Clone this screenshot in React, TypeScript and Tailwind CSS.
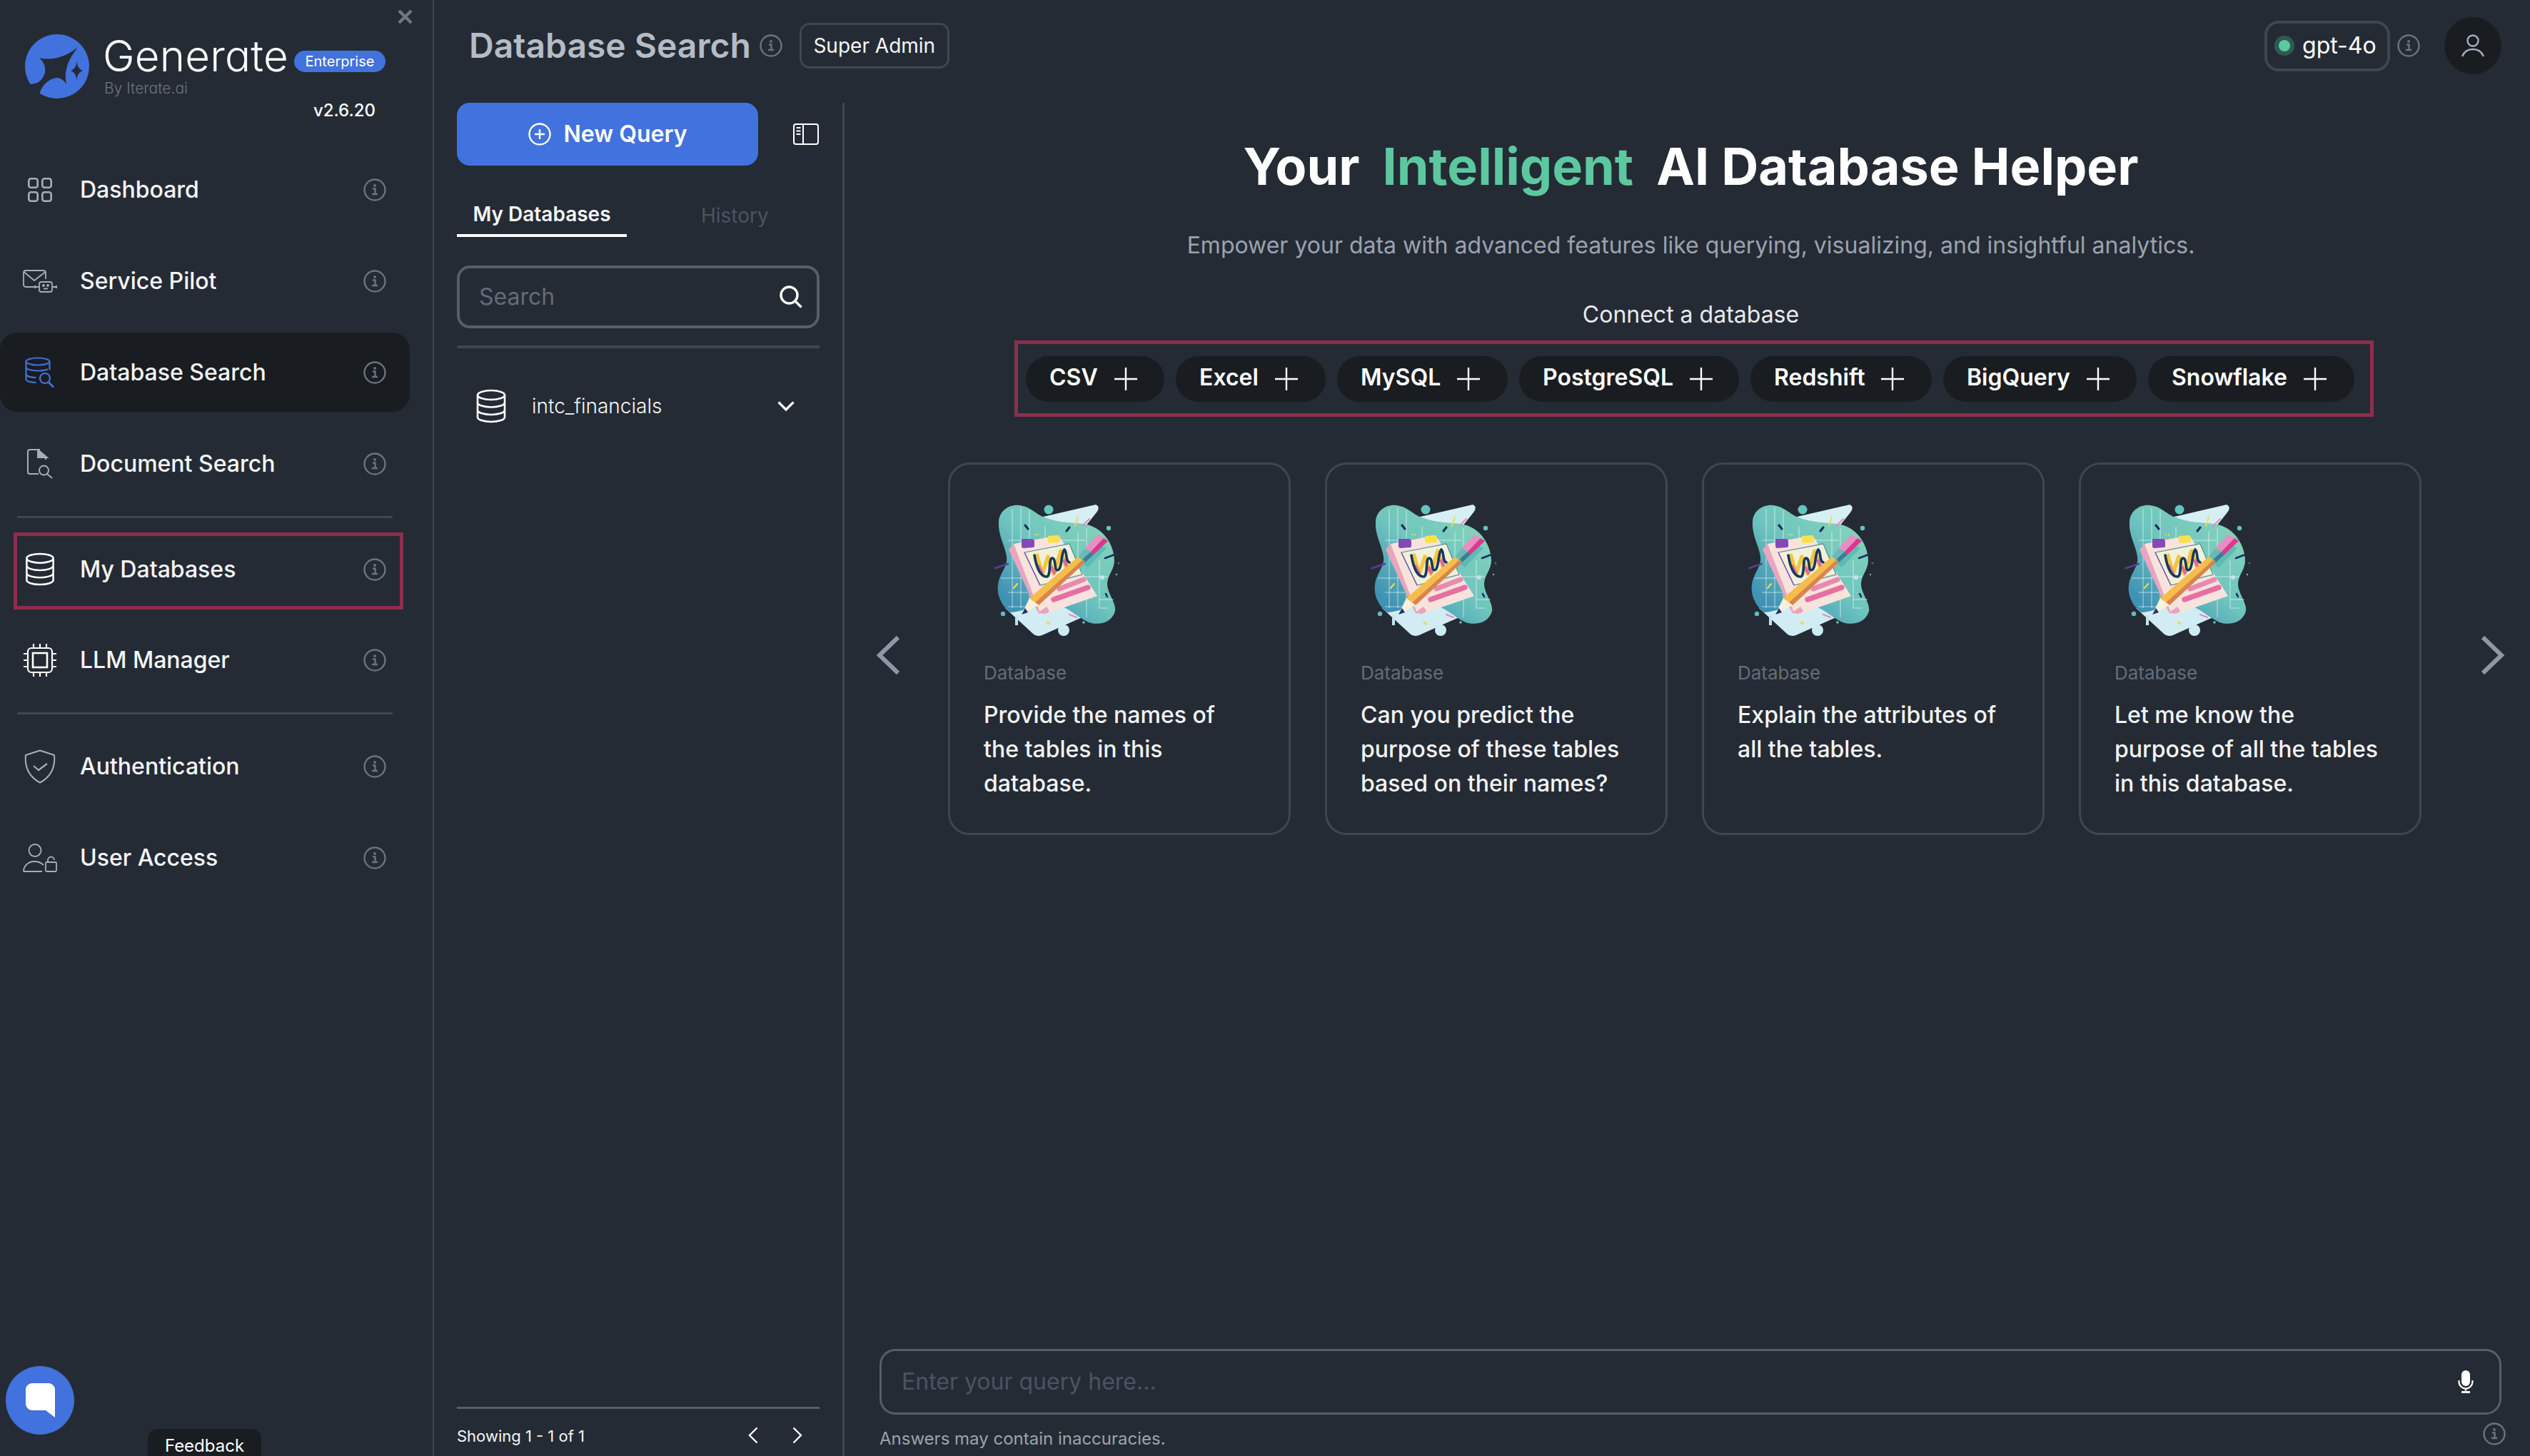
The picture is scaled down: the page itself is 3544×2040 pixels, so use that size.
import React from "react";

const Info = ({ className = "w-8 h-8" }: { className?: string }) => (
  <svg viewBox="0 0 32 32" className={className + " shrink-0"} fill="none">
    <circle cx="16" cy="16" r="14.5" stroke="#6b7381" strokeWidth="2.4" />
    <circle cx="16" cy="10" r="1.9" fill="#6b7381" />
    <path d="M13 14.5h3.5v7 M12 22h8" stroke="#6b7381" strokeWidth="2.4" />
  </svg>
);

const Db = ({ className = "", color = "#fff", sw = 3 }: { className?: string; color?: string; sw?: number }) => (
  <svg viewBox="0 0 42 48" className={className} fill="none" stroke={color} strokeWidth={sw}>
    <ellipse cx="21" cy="8.5" rx="19" ry="6.5" />
    <path d="M2 8.5v31c0 3.6 8.5 6.5 19 6.5s19-2.900 19-6.500v-31" />
    <path d="M2 19c0 3.600 8.500 6.500 19 6.500S40 22.600 40 19" />
    <path d="M2 29.500c0 3.600 8.500 6.500 19 6.500s19-2.900 19-6.500" />
  </svg>
);

const IconDashboard = () => (
  <svg viewBox="0 0 34 34" className="w-[34px] h-[34px]" fill="none" stroke="#a5aebb" strokeWidth="2.600">
    <rect x="1.300" y="1.300" width="12.400" height="12.400" rx="3" />
    <rect x="20.300" y="1.300" width="12.400" height="12.400" rx="3" />
    <rect x="1.300" y="20.300" width="12.400" height="12.400" rx="3" />
    <rect x="20.300" y="20.300" width="12.400" height="12.400" rx="3" />
  </svg>
);
const IconPilot = () => (
  <svg viewBox="0 0 48 32" className="w-12 h-8" fill="none" stroke="#a5aebb" strokeWidth="1.800">
    <path d="M15 24H4a3 3 0 0 1-3-3V4a3 3 0 0 1 3-3h25a3 3 0 0 1 3 3v9" />
    <path d="M1.500 3L16 15 31.500 3" />
    <rect x="23" y="17" width="18" height="14" rx="3" />
    <path d="M17 24h6M41 24h6" />
    <circle cx="17" cy="24" r="1" fill="#a5aebb" />
    <circle cx="47" cy="24" r="1" fill="#a5aebb" />
    <circle cx="29" cy="22" r="1" fill="#a5aebb" />
    <circle cx="35" cy="22" r="1" fill="#a5aebb" />
    <path d="M29 26.500h6" />
  </svg>
);
const IconDbSearch = () => (
  <svg viewBox="0 0 42 44" className="w-[42px] h-[44px]" fill="none" stroke="#4272dd" strokeWidth="2.200">
    <ellipse cx="18" cy="6.500" rx="16.500" ry="5" />
    <path d="M1.500 6.500v25c0 2.800 7 4.500 14 4.500M34.500 6.500v12" />
    <path d="M1.500 14.500c0 2.800 7.400 5 16.500 5 6 0 11-.8 14-2.200" />
    <path d="M1.500 24c0 2.800 6 4.800 14 5" />
    <circle cx="28" cy="30" r="7" />
    <path d="M33 35.500l7 7" strokeWidth="2.600" />
  </svg>
);
const IconDoc = () => (
  <svg viewBox="0 0 38 42" className="w-[38px] h-[42px]" fill="none" stroke="#a5aebb" strokeWidth="2">
    <path d="M19 1H5a3 3 0 0 0-3 3v28a3 3 0 0 0 3 3h12" />
    <path d="M16 1l13 11h-13z" fill="#a5aebb" />
    <path d="M27 11v4" />
    <circle cx="24.500" cy="30" r="6.500" />
    <path d="M29 35l7 6" />
  </svg>
);
const IconChip = () => (
  <svg viewBox="0 0 48 48" className="w-12 h-12" fill="none" stroke="#fff" strokeWidth="2.200">
    <rect x="7" y="7" width="34" height="34" rx="5" />
    <rect x="14" y="14" width="20" height="20" strokeWidth="2.600" />
    <path d="M15 1v6M24 1v6M33 1v6M15 41v6M24 41v6M33 41v6M1 15h6M1 24h6M1 33h6M41 15h6M41 24h6M41 33h6" />
  </svg>
);
const IconShield = () => (
  <svg viewBox="0 0 44 48" className="w-[44px] h-12" fill="none" stroke="#a5aebb" strokeWidth="2">
    <path d="M22 1.500L42 8c1.500 16-4 30-20 38.500C6 38 .5 24 2 8z" strokeLinejoin="round" />
    <path d="M13 23l7 6 12-9" strokeWidth="2.200" />
  </svg>
);
const IconUser = () => (
  <svg viewBox="0 0 48 40" className="w-12 h-10" fill="none" stroke="#a5aebb" strokeWidth="1.800">
    <circle cx="17" cy="9.500" r="8.500" />
    <path d="M1 39c0-8 7-14 15-14 6 0 10 2 13 5M1 39h26" />
    <rect x="32" y="26" width="15" height="13" rx="1.500" />
    <path d="M35 26v-3a4.500 4.500 0 0 1 9 0" />
  </svg>
);

type NavProps = { icon: React.ReactNode; label: string; active?: boolean; className?: string };
const NavItem = ({ icon, label, active, className = "" }: NavProps) => (
  <div className={`flex items-center h-[111px] w-[574px] pl-8 pr-[33px] rounded-[24px] ${active ? "bg-[#191d21]" : ""} ${className}`}>
    <div className="w-12 flex justify-center shrink-0">{icon}</div>
    <span className="ml-[32px] flex-1 text-[32px] font-medium leading-none text-[#f5f6f7]">{label}</span>
    <Info />
  </div>
);

const Divider = ({ className = "" }: { className?: string }) => (
  <div className={`ml-6 w-[526px] h-[3px] bg-[#3f4653] ${className}`} />
);

const Logo = () => (
  <svg viewBox="0 0 90 90" className="w-[90px] h-[90px] shrink-0">
    <ellipse cx="45" cy="45" rx="45" ry="45" fill="#4272dd" />
    <path d="M74 18C60 30 40 38 20 33C28 40 32 52 24 62C20 68 14 70 6 70C8 76 14 82 20 86C21 75 32 62 45 61C50 61 55 65 58 70C54 52 60 36 74 18Z" fill="#252b34" />
    <path d="M72.500 38C73.500 46 76 49 81 51C76 53 73.500 56 72.500 64C71.500 56 69 53 64 51C69 49 71.500 46 72.500 38Z" fill="#252b34" />
  </svg>
);

const Illustration = () => (
  <svg viewBox="0 0 240 240" className="w-[240px] h-[240px]">
    <defs>
      <linearGradient id="blobg" x1="0.800" y1="0.100" x2="0.150" y2="0.850">
        <stop offset="0" stopColor="#83d2bb" />
        <stop offset="0.500" stopColor="#6ec5be" />
        <stop offset="1" stopColor="#3f92b4" />
      </linearGradient>
    </defs>
    <path d="M97 45L175 27Q182 30 176 38L160 58Q125 60 97 45Z" fill="#d6eff4" />
    <path d="M48 172L85 206Q92 214 102 209L158 184L122 165Z" fill="#d1edf3" />
    <rect x="62" y="182" width="4" height="14" fill="#bfe6f0" />
    <path d="M39 52C39 35 55 26 68 28C85 30 92 42 104 45C120 52 140 52 158 54C185 58 200 82 201 105C201 118 192 125 191 137C190 150 204 165 202 176C198 192 180 197 165 192C148 184 138 172 122 168C100 164 70 178 55 178C42 168 36 152 38 140C40 122 52 115 50 100C48 85 38 70 39 52Z" fill="url(#blobg)" />
    <g stroke="#ffffff" strokeOpacity="0.600" strokeWidth="1" fill="none">
      <path d="M58 33V172M70 31V172M82 35V172M104 58V100M150 65V120M162 60V100M52 77H160M52 170H90M52 150H90M42 130H90M160 128H192M180 105V172M180 160H200M180 172H192M162 140V185" />
    </g>
    <circle cx="109" cy="34" r="6.500" fill="#62c6bf" />
    <circle cx="193" cy="60" r="3.200" fill="#62c6bf" />
    <circle cx="45" cy="180" r="3.200" fill="#5cbcc5" />
    <circle cx="130" cy="203" r="8" fill="#cdecf2" />
    <circle cx="158" cy="192" r="1.800" fill="#62c6bf" />
    <circle cx="207" cy="109" r="1.500" fill="#4f5d9a" />
    <circle cx="204" cy="125" r="1.200" fill="#62c6bf" />
    <circle cx="184" cy="129" r="3" fill="#c6e4ee" />
    <path d="M146 57L150 44" stroke="#f1d94f" strokeWidth="1.800" strokeLinecap="round" />
    <path d="M156 57L166 47" stroke="#e489c0" strokeWidth="2" strokeLinecap="round" />
    <path d="M76 56L80 61" stroke="#18305a" strokeWidth="3.200" strokeLinecap="round" />
    <path d="M134 64L138 59" stroke="#18305a" strokeWidth="3.200" strokeLinecap="round" />
    <path d="M188 102L204 96" stroke="#18305a" strokeWidth="2.600" strokeLinecap="round" />
    <path d="M189 152L191 156" stroke="#18305a" strokeWidth="2.600" strokeLinecap="round" />
    <path d="M34 116L52 110" stroke="#5e3b96" strokeWidth="2.400" strokeLinecap="round" />
    <path d="M60 144L65 138" stroke="#eed94d" strokeWidth="2.200" strokeLinecap="round" />
    <path d="M138 181L148 185" stroke="#e489c0" strokeWidth="2.200" strokeLinecap="round" />
    <path d="M107 192L110 194" stroke="#f1d94f" strokeWidth="3" strokeLinecap="round" />
    <path d="M89 69h2M93 69h2" stroke="#f1d94f" strokeWidth="2" />
    <path d="M53 90L60 82L100 172Q103 178 96 180L93 176Z" fill="#e9a5bf" />
    <path d="M60 82L123 70L177 155L105 180Q98 180 96 176Z" fill="#f8e3dc" />
    <path d="M71 75h14q4 0 4 4v6q0 2-3 2l-12 1q-3 0-3-3z" fill="#8249b8" />
    <path d="M108 71l12-1q4 0 5 4v4q0 2-3 2l-11 1q-3 0-3-3z" fill="#f9e04d" />
    <path d="M75 94L138 82L156 125L97 140Z" fill="#f3f0d8" stroke="#4f8d9c" strokeWidth="1.200" />
    <path d="M75 94L97 140" stroke="#7a52b8" strokeWidth="1.400" />
    <path d="M92 96L100 124L108 100L116 124L126 92L134 116" stroke="#f2c542" strokeWidth="5.500" fill="none" strokeLinejoin="round" />
    <path d="M94 112L100 124M112 114L118 124M130 104L136 116" stroke="#e2689c" strokeWidth="4.500" fill="none" />
    <path d="M89 98C92 116 98 128 106 128C113 128 108 102 114 102C120 102 116 124 123 118C128 114 126 96 131 90C135 92 132 106 138 108" stroke="#17395c" strokeWidth="3.600" fill="none" strokeLinecap="round" />
    <path d="M124 145L158 132" stroke="#e78aae" strokeWidth="7" strokeLinecap="round" />
    <path d="M116 160L164 143" stroke="#e66fa2" strokeWidth="7.500" strokeLinecap="round" />
    <path d="M96 177L106 170L110 176Q108 180 100 180Z" fill="#eaa3bf" />
    <path d="M152 106L178 82L190 88L164 115Z" fill="#52b4b2" opacity="0.700" />
    <path d="M82 158L150 100L156 105L90 164Z" fill="#f6bd4b" />
    <path d="M90 164L156 105L160 108L95 168Z" fill="#d9844a" />
    <path d="M82 158L95 168L71 181Z" fill="#f8f1dc" />
    <path d="M71 181L76 172L80 178Z" fill="#27306b" />
    <path d="M150 100L160 88L168 93L157 103Z" fill="#6cb8b4" />
    <path d="M157 103L168 93L172 97L160 108Z" fill="#3e7c94" />
    <path d="M160 87L178 69L186 74L168 93Z" fill="#e88ec2" />
    <path d="M168 93L186 74L192 78L172 97Z" fill="#e1348d" />
  </svg>
);

const Chevron = ({ dir, className, color, sw }: { dir: "l" | "r"; className: string; color: string; sw: number }) => (
  <svg viewBox="0 0 34 56" className={className} fill="none" stroke={color} strokeWidth={sw} strokeLinejoin="miter">
    <path d={dir === "l" ? "M31 3L5 28l26 25" : "M3 3l26 25L3 53"} />
  </svg>
);

const cards = [
  ["Provide the names of", "the tables in this", "database."],
  ["Can you predict the", "purpose of these tables", "based on their names?"],
  ["Explain the attributes of", "all the tables."],
  ["Let me know the", "purpose of all the tables", "in this database."],
];

const Plus = () => (
  <svg viewBox="0 0 32 32" className="w-8 h-8 ml-[23px]" stroke="#fff" strokeWidth="2.400">
    <path d="M16 0v32M0 16h32" />
  </svg>
);

const pills: [string, string][] = [
  ["CSV", "w-[194px]"],
  ["Excel", "w-[210px]"],
  ["MySQL", "w-[239px]"],
  ["PostgreSQL", "w-[308px]"],
  ["Redshift", "w-[254px]"],
  ["BigQuery", "w-[271px]"],
  ["Snowflake", "w-[289px]"],
];

export default function App() {
  return (
    <div className="flex w-[3544px] h-[2040px] overflow-hidden bg-[#252b34] font-['Inter',sans-serif] text-white">
      {/* Sidebar */}
      <aside className="relative w-[608px] shrink-0 border-r-2 border-[#3f4653] flex flex-col">
        <svg viewBox="0 0 22 22" className="absolute left-[557px] top-[13px] w-[21px] h-[21px]" stroke="#6f7785" strokeWidth="4.500">
          <path d="M2 2l18 18M20 2L2 20" />
        </svg>
        <div className="h-[210px] shrink-0 pt-12">
          <div className="flex pl-[35px]">
            <Logo />
            <div className="ml-[21px] flex flex-col">
              <div className="flex items-start">
                <span className="text-[60px] leading-[60px] font-light tracking-[0.2px] [font-feature-settings:'cv11'] text-white -ml-[2px]">Generate</span>
                <span className="ml-2 mt-[23px] h-[30px] w-[128px] rounded-full bg-[#4272dd] text-[20px] leading-[30px] text-center [font-feature-settings:'cv11'] font-normal text-white">Enterprise</span>
              </div>
              <span className="mt-1 text-[21px] leading-6 [font-feature-settings:'cv11'] font-light text-[#6b7381]">By Iterate.ai</span>
            </div>
          </div>
          <div className="mt-[5px] pr-[80px] text-right text-[24px] leading-6 font-medium text-white">v2.6.20</div>
        </div>
        <nav className="flex flex-col">
          <NavItem icon={<IconDashboard />} label="Dashboard" />
          <NavItem icon={<IconPilot />} label="Service Pilot" className="mt-[17px]" />
          <NavItem icon={<IconDbSearch />} label="Database Search" active className="mt-[17px]" />
          <NavItem icon={<IconDoc />} label="Document Search" className="mt-[17px]" />
          <Divider className="mt-[18px]" />
          <div className="mt-5 ml-[19px] w-[546px] h-[108px] border-[5px] border-[#8f2d4d] flex items-center pl-2 pr-[19px] pb-[5px]">
            <div className="w-12 flex justify-center shrink-0"><Db className="w-[42px] h-[47px]" sw={2.600} /></div>
            <span className="ml-[32px] flex-1 text-[32px] font-medium leading-none text-[#f5f6f7]">My Databases</span>
            <Info />
          </div>
          <NavItem icon={<IconChip />} label="LLM Manager" className="mt-[15px]" />
          <Divider className="mt-[18px]" />
          <NavItem icon={<IconShield />} label="Authentication" className="mt-[17px]" />
          <NavItem icon={<IconUser />} label="User Access" className="mt-[17px]" />
        </nav>
        <div className="absolute left-2 top-[1914px] w-24 h-24 rounded-full bg-[#4272dd] flex items-center justify-center">
          <svg viewBox="0 0 41 48" className="w-[41px] h-12" fill="#fff">
            <path d="M9 0h23a9 9 0 0 1 9 9v39l-13-10H9a9 9 0 0 1-9-9V9a9 9 0 0 1 9-9z" />
          </svg>
        </div>
        <div className="absolute left-[207px] top-[2002px] w-[159px] h-[40px] rounded-t-[14px] bg-[#191d21] text-[24px] leading-[48px] text-center text-white">Feedback</div>
      </aside>

      {/* Right */}
      <div className="flex-1 min-w-0 flex flex-col">
        <header className="h-[128px] mb-4 shrink-0 flex items-center pl-[49px] pr-10">
          <h1 className="text-[48px] font-semibold leading-none text-[#b4bcc6]">Database Search</h1>
          <Info className="w-8 h-8 ml-3" />
          <div className="ml-[24px] h-16 w-[210px] rounded-[14px] border-[3px] border-[#3f4653] flex items-center justify-center text-[28px] text-[#f5f6f7]">Super Admin</div>
          <div className="ml-auto flex items-center">
            <div className="h-[71px] w-[176px] rounded-[20px] border-4 border-[#3f4653] flex items-center pl-[10px]">
              <div className="w-7 h-7 rounded-full bg-[#2f5a52] flex items-center justify-center">
                <div className="w-4 h-4 rounded-full bg-[#5cc8a0]" />
              </div>
              <span className="ml-[11px] text-[32px] leading-none text-white">gpt-4o</span>
            </div>
            <Info className="w-8 h-8 ml-[10px]" />
            <div className="ml-[34px] w-20 h-20 rounded-full bg-[#191d21] flex items-center justify-center">
              <svg viewBox="0 0 32 32" className="w-8 h-8" fill="none" stroke="#a5aebb" strokeWidth="2.400">
                <circle cx="16" cy="9" r="7.500" />
                <path d="M1 31c3-7 9-10 15-10s12 3 15 10" />
              </svg>
            </div>
          </div>
        </header>

        <div className="flex-1 min-h-0 flex">
          {/* List panel */}
          <section className="w-[572px] shrink-0 px-8 flex flex-col">
            <div className="flex items-center">
              <div className="w-[422px] h-[88px] rounded-[18px] bg-[#4272dd] flex items-center justify-center">
                <svg viewBox="0 0 32 32" className="w-8 h-8" fill="none" stroke="#fff" strokeWidth="2.400">
                  <circle cx="16" cy="16" r="14.500" />
                  <path d="M16 9v14M9 16h14" />
                </svg>
                <span className="ml-[18px] text-[32px] font-semibold leading-none text-white">New Query</span>
              </div>
              <svg viewBox="0 0 36 30" className="ml-[49px] w-9 h-[30px]" fill="none" stroke="#fff" strokeWidth="2">
                <rect x="1" y="1" width="34" height="28" rx="3" />
                <path d="M14 1v28" />
                <path d="M4.500 6h6M4.500 10.500h6M4.500 15h6" strokeWidth="2" />
              </svg>
            </div>
            <div className="mt-10 h-[60px] flex text-[28px] leading-none">
              <div className="w-[238px] h-full border-b-4 border-white flex items-center justify-center font-semibold text-[#f5f6f7]">My Databases</div>
              <div className="pl-[104px] h-full flex items-center text-[#4b5362]">History</div>
            </div>
            <div className="mt-10 h-[88px] rounded-[18px] border-4 border-[#565e6b] flex items-center pl-[27px] pr-5 justify-between">
              <span className="text-[32px] leading-none text-[#636b79]">Search</span>
              <svg viewBox="0 0 32 32" className="w-8 h-8" fill="none" stroke="#fff" strokeWidth="3.400">
                <circle cx="13.500" cy="13.500" r="11.500" />
                <path d="M22 22l8.500 8.500" />
              </svg>
            </div>
            <div className="mt-6 h-1 bg-[#3f4653]" />
            <div className="mt-[41px] h-20 flex items-center pl-[27px] pr-[35px]">
              <Db className="w-[42px] h-[48px]" sw={2.600} />
              <span className="ml-9 flex-1 text-[28px] font-light leading-none text-[#f5f6f7]">intc_financials</span>
              <svg viewBox="0 0 24 14" className="w-6 h-[14px]" fill="none" stroke="#fff" strokeWidth="3.200">
                <path d="M1.500 1.500L12 12 22.500 1.500" />
              </svg>
            </div>
            <div className="mt-auto h-[69px] shrink-0 border-t-[3px] border-[#565e6b] flex items-center pr-[24px]">
              <span className="text-[22px] leading-none text-[#f5f6f7] flex-1 pt-[10px]">Showing 1 - 1 of 1</span>
              <div className="flex items-center gap-[48px] pt-[8px]">
                <svg viewBox="0 0 14 24" className="w-[14px] h-6" fill="none" stroke="#fff" strokeWidth="2.400"><path d="M12.500 1.500L2 12l10.500 10.500" /></svg>
                <svg viewBox="0 0 14 24" className="w-[14px] h-6" fill="none" stroke="#fff" strokeWidth="2.400"><path d="M1.500 1.500L12 12 1.500 22.500" /></svg>
              </div>
            </div>
          </section>

          {/* Main */}
          <main className="flex-1 min-w-0 border-l-[3px] border-[#3f4653] flex flex-col">
            <h2 className="mt-[45px] h-[88px] flex items-center justify-center ml-[10px] text-[72px] font-bold leading-none text-white">
              <span>Your</span>
              <span className="ml-[32px] text-[#5cc8a0]">Intelligent</span>
              <span className="ml-[32px]">AI Database Helper</span>
            </h2>
            <p className="mt-[43px] ml-[10px] h-12 text-center text-[32px] leading-[48px] text-[#9aa3b0]">Empower your data with advanced features like querying, visualizing, and insightful analytics.</p>
            <p className="mt-[49px] ml-[10px] h-12 text-center text-[32px] leading-[48px] text-[#e8eaed]">Connect a database</p>
            <div className="mt-3 ml-[238px] w-[1904px] h-[107px] border-[5px] border-[#8f2d4d] flex items-center gap-4 pl-[11px]">
              {pills.map(([name, w]) => (
                <div key={name} className={`h-16 rounded-full bg-[#191d21] flex items-center pl-[33px] ${w}`}>
                  <span className="text-[32px] font-semibold leading-none text-white -mt-[3px]">{name}</span>
                  <Plus />
                </div>
              ))}
            </div>
            <div className="mt-[64px] flex items-center ml-[44px]">
              <Chevron dir="l" className="w-[34px] h-[56px] mt-[18px]" color="#8e97a5" sw={6} />
              <div className="ml-[67px] flex gap-[48px]">
                {cards.map((lines, i) => (
                  <div key={i} className="w-[480px] h-[522px] rounded-[30px] border-[3px] border-[#3f4653] pt-[29px]">
                    <div className="ml-[29px]"><Illustration /></div>
                    <div className="pl-[47px] mt-[7px] text-[26px] leading-[32px] text-[#646c7a]">Database</div>
                    <div className="pl-[47px] mt-[19px] text-[32px] leading-[48px] font-medium text-[#f3f4f6]">
                      {lines.map((l) => (
                        <div key={l}>{l}</div>
                      ))}
                    </div>
                  </div>
                ))}
              </div>
              <Chevron dir="r" className="ml-[83px] w-[34px] h-[56px] mt-[18px]" color="#8e97a5" sw={6} />
            </div>
            <div className="mt-auto mx-10 ml-[49px] h-[92px] shrink-0 rounded-[22px] border-[3px] border-[#565e6b] flex items-center justify-between pl-[28px] pr-[36px]">
              <span className="text-[32px] leading-none text-[#4b5362]">Enter your query here...</span>
              <svg viewBox="0 0 22 32" className="w-[22px] h-8" fill="none" stroke="#fff">
                <rect x="5" y="0" width="12" height="22" rx="6" fill="#fff" stroke="none" />
                <path d="M1.500 14v2a9.500 9.500 0 0 0 19 0v-2" strokeWidth="2.200" />
                <path d="M11 25.500v3" strokeWidth="2.600" />
                <path d="M5 30.500h12" strokeWidth="2.800" />
              </svg>
            </div>
            <div className="h-[58px] shrink-0 ml-[49px] mr-[34px] flex items-start justify-between">
              <span className="mt-[22px] text-[24px] leading-6 text-[#9aa3b0]">Answers may contain inaccuracies.</span>
              <Info className="w-8 h-8 mt-[11px]" />
            </div>
          </main>
        </div>
      </div>
    </div>
  );
}
